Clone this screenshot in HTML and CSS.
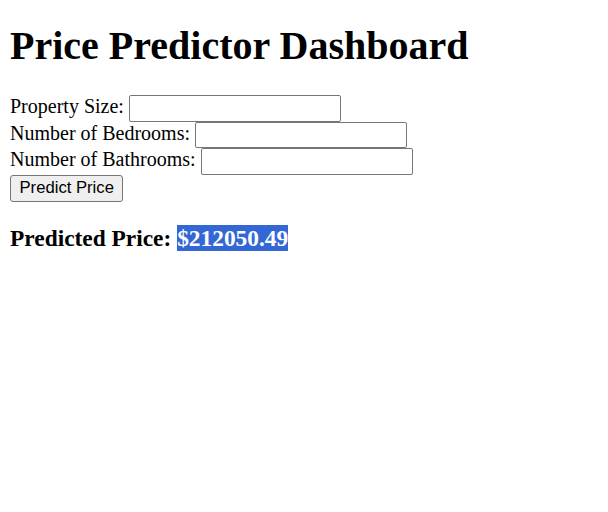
FILE: index.html
```html
<!DOCTYPE html>
<html>
<head>
<meta charset="utf-8">
<title>Price Predictor Dashboard</title>
<link rel="stylesheet" href="styles.css">
</head>
<body>
<h1 class="title">Price Predictor Dashboard</h1>
<form class="form">
<label for="size">Property Size:</label> <input class="field" type="text" id="size"><br>
<label for="bed">Number of Bedrooms:</label> <input class="field" type="text" id="bed"><br>
<label for="bath">Number of Bathrooms:</label> <input class="field" type="text" id="bath"><br>
<button class="btn" type="button">Predict Price</button>
</form>
<h3 class="result">Predicted Price: <span class="sel">$212050.49</span></h3>
</body>
</html>
```
FILE: styles.css
```css
body {
  font-family: "Liberation Serif", "Times New Roman", serif;
  font-size: 20px;
  margin: 10px;
  color: #000;
  background: #fff;
}
.title {
  font-size: 2em;
  margin: 12px 0 26px;
}
.form {
  margin: 0;
}
.field {
  font-family: "Liberation Sans", Arial, sans-serif;
  font-size: 16.667px;
  box-sizing: border-box;
  width: 212px;
  height: 26.5px;
  padding: 1px 3px;
  border: 1px solid #767676;
  border-radius: 2px;
  background: #fff;
  margin: 0;
}
.btn {
  font-family: "Liberation Sans", Arial, sans-serif;
  font-size: 16.667px;
  box-sizing: border-box;
  height: 27px;
  padding: 1px 8.5px;
  border: 1px solid #767676;
  border-radius: 3px;
  background: #efefef;
  color: #000;
  margin: 0;
}
.result {
  font-size: 1.17em;
  margin: 1em 0;
}
.sel {
  background: #3367d6;
  color: #fff;
}
```
